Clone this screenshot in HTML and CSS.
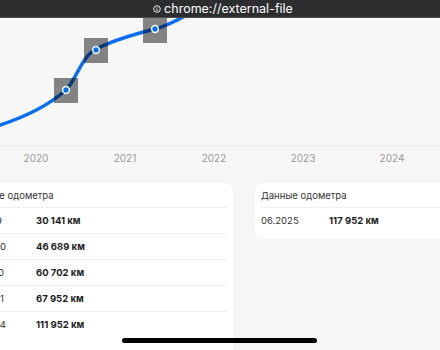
FILE: index.html
```html
<!DOCTYPE html>
<html lang="ru">
<head>
<meta charset="UTF-8">
<meta name="viewport" content="width=device-width, initial-scale=1.0">
<title>Данные одометра</title>
<link rel="stylesheet" href="styles.css">
</head>
<body>
<div class="topbar">
    <svg class="info-icon" width="8" height="8" viewBox="0 0 8 8">
        <circle cx="4" cy="4" r="3.3" fill="none" stroke="#fff" stroke-width="0.9"/>
        <line x1="4" y1="3.4" x2="4" y2="6" stroke="#fff" stroke-width="0.9"/>
        <circle cx="4" cy="2.2" r="0.5" fill="#fff"/>
    </svg>
    <span>chrome://external-file</span>
</div>

<div class="chart">
    <svg width="440" height="147" viewBox="0 18 440 147">
        <line x1="0" y1="145.5" x2="440" y2="145.5" stroke="#e9e9e9" stroke-width="1"/>
        <path d="M0,125 C25,117 50,104 66,90 C76,80 82,56 96,49 C112,41 135,34 155,29 C167,26 178,20 192,12"
              fill="none" stroke="#0a6ef2" stroke-width="3.5" stroke-linecap="round"/>
        <!-- маркеры -->
        <rect x="54" y="78" width="24" height="25" fill="rgba(0,0,0,0.47)"/>
        <rect x="84" y="38" width="24" height="25" fill="rgba(0,0,0,0.47)"/>
        <rect x="143" y="18" width="24" height="25" fill="rgba(0,0,0,0.47)"/>
        <circle cx="66" cy="90" r="3.4" fill="#0a6ef2" stroke="#fff" stroke-width="1.5"/>
        <circle cx="96" cy="50" r="3.4" fill="#0a6ef2" stroke="#fff" stroke-width="1.5"/>
        <circle cx="155" cy="29" r="3.4" fill="#0a6ef2" stroke="#fff" stroke-width="1.5"/>
        <g class="axis-label">
            <text x="36" y="162" text-anchor="middle">2020</text>
            <text x="125" y="162" text-anchor="middle">2021</text>
            <text x="214" y="162" text-anchor="middle">2022</text>
            <text x="303" y="162" text-anchor="middle">2023</text>
            <text x="392" y="162" text-anchor="middle">2024</text>
        </g>
    </svg>
</div>

<div class="cards">
    <div class="card card-tall">
        <div class="card-title">Данные одометра</div>
        <div class="row"><span class="date">12.2019</span><span class="value">30 141 км</span></div>
        <div class="row"><span class="date">09.2020</span><span class="value">46 689 км</span></div>
        <div class="row"><span class="date">12.2020</span><span class="value">60 702 км</span></div>
        <div class="row"><span class="date">06.2021</span><span class="value">67 952 км</span></div>
        <div class="row"><span class="date">06.2024</span><span class="value">111 952 км</span></div>
    </div>
    <div class="card">
        <div class="card-title">Данные одометра</div>
        <div class="row"><span class="date">06.2025</span><span class="value">117 952 км</span></div>
    </div>
</div>

<div class="bottom-line"></div>
<div class="home-indicator"></div>
</body>
</html>
```

FILE: styles.css
```css
body {
    margin: 0;
    width: 440px;
    height: 350px;
    overflow: hidden;
    background-color: #f6f6f6;
    font-family: Inter, "Noto Sans", sans-serif;
    color: #2a2a2a;
    display: flex;
    flex-direction: column;
    position: relative;
}
.topbar {
    height: 17px;
    background-color: #2b2d2f;
    border-bottom: 1px solid #4a4c4e;
    color: #fff;
    font-size: 12.5px;
    display: flex;
    justify-content: center;
    align-items: center;
    gap: 3px;
    padding-left: 6px;
    flex-shrink: 0;
}
.info-icon {
    display: block;
}
.chart {
    height: 147px;
    flex-shrink: 0;
    background-color: #f7f7f7;
}
.chart svg {
    display: block;
}
.axis-label text {
    font-family: Inter, "Noto Sans", sans-serif;
    font-size: 10px;
    fill: #9a9a9a;
}
.cards {
    flex: 1;
    display: grid;
    grid-template-columns: 271px 271px;
    align-items: start;
    gap: 22px;
    margin-left: -38px;
    padding-top: 18px;
}
.card {
    background-color: #fff;
    border-radius: 8px;
    padding: 0 6px 6px;
    font-size: 9.5px;
}
.card-tall {
    min-height: 170px;
}
.card-title {
    height: 24px;
    line-height: 26px;
    color: #333;
}
.row {
    height: 25px;
    display: flex;
    align-items: center;
    border-top: 1px solid #f0f0f0;
}
.date {
    width: 68px;
    color: #333;
}
.value {
    font-weight: 700;
    color: #1c1c1c;
}
.bottom-line {
    height: 2px;
    background-color: #a9a9a9;
    flex-shrink: 0;
}
.home-indicator {
    position: absolute;
    left: 122px;
    top: 338px;
    width: 195px;
    height: 5px;
    border-radius: 3px;
    background-color: #000;
}
```
